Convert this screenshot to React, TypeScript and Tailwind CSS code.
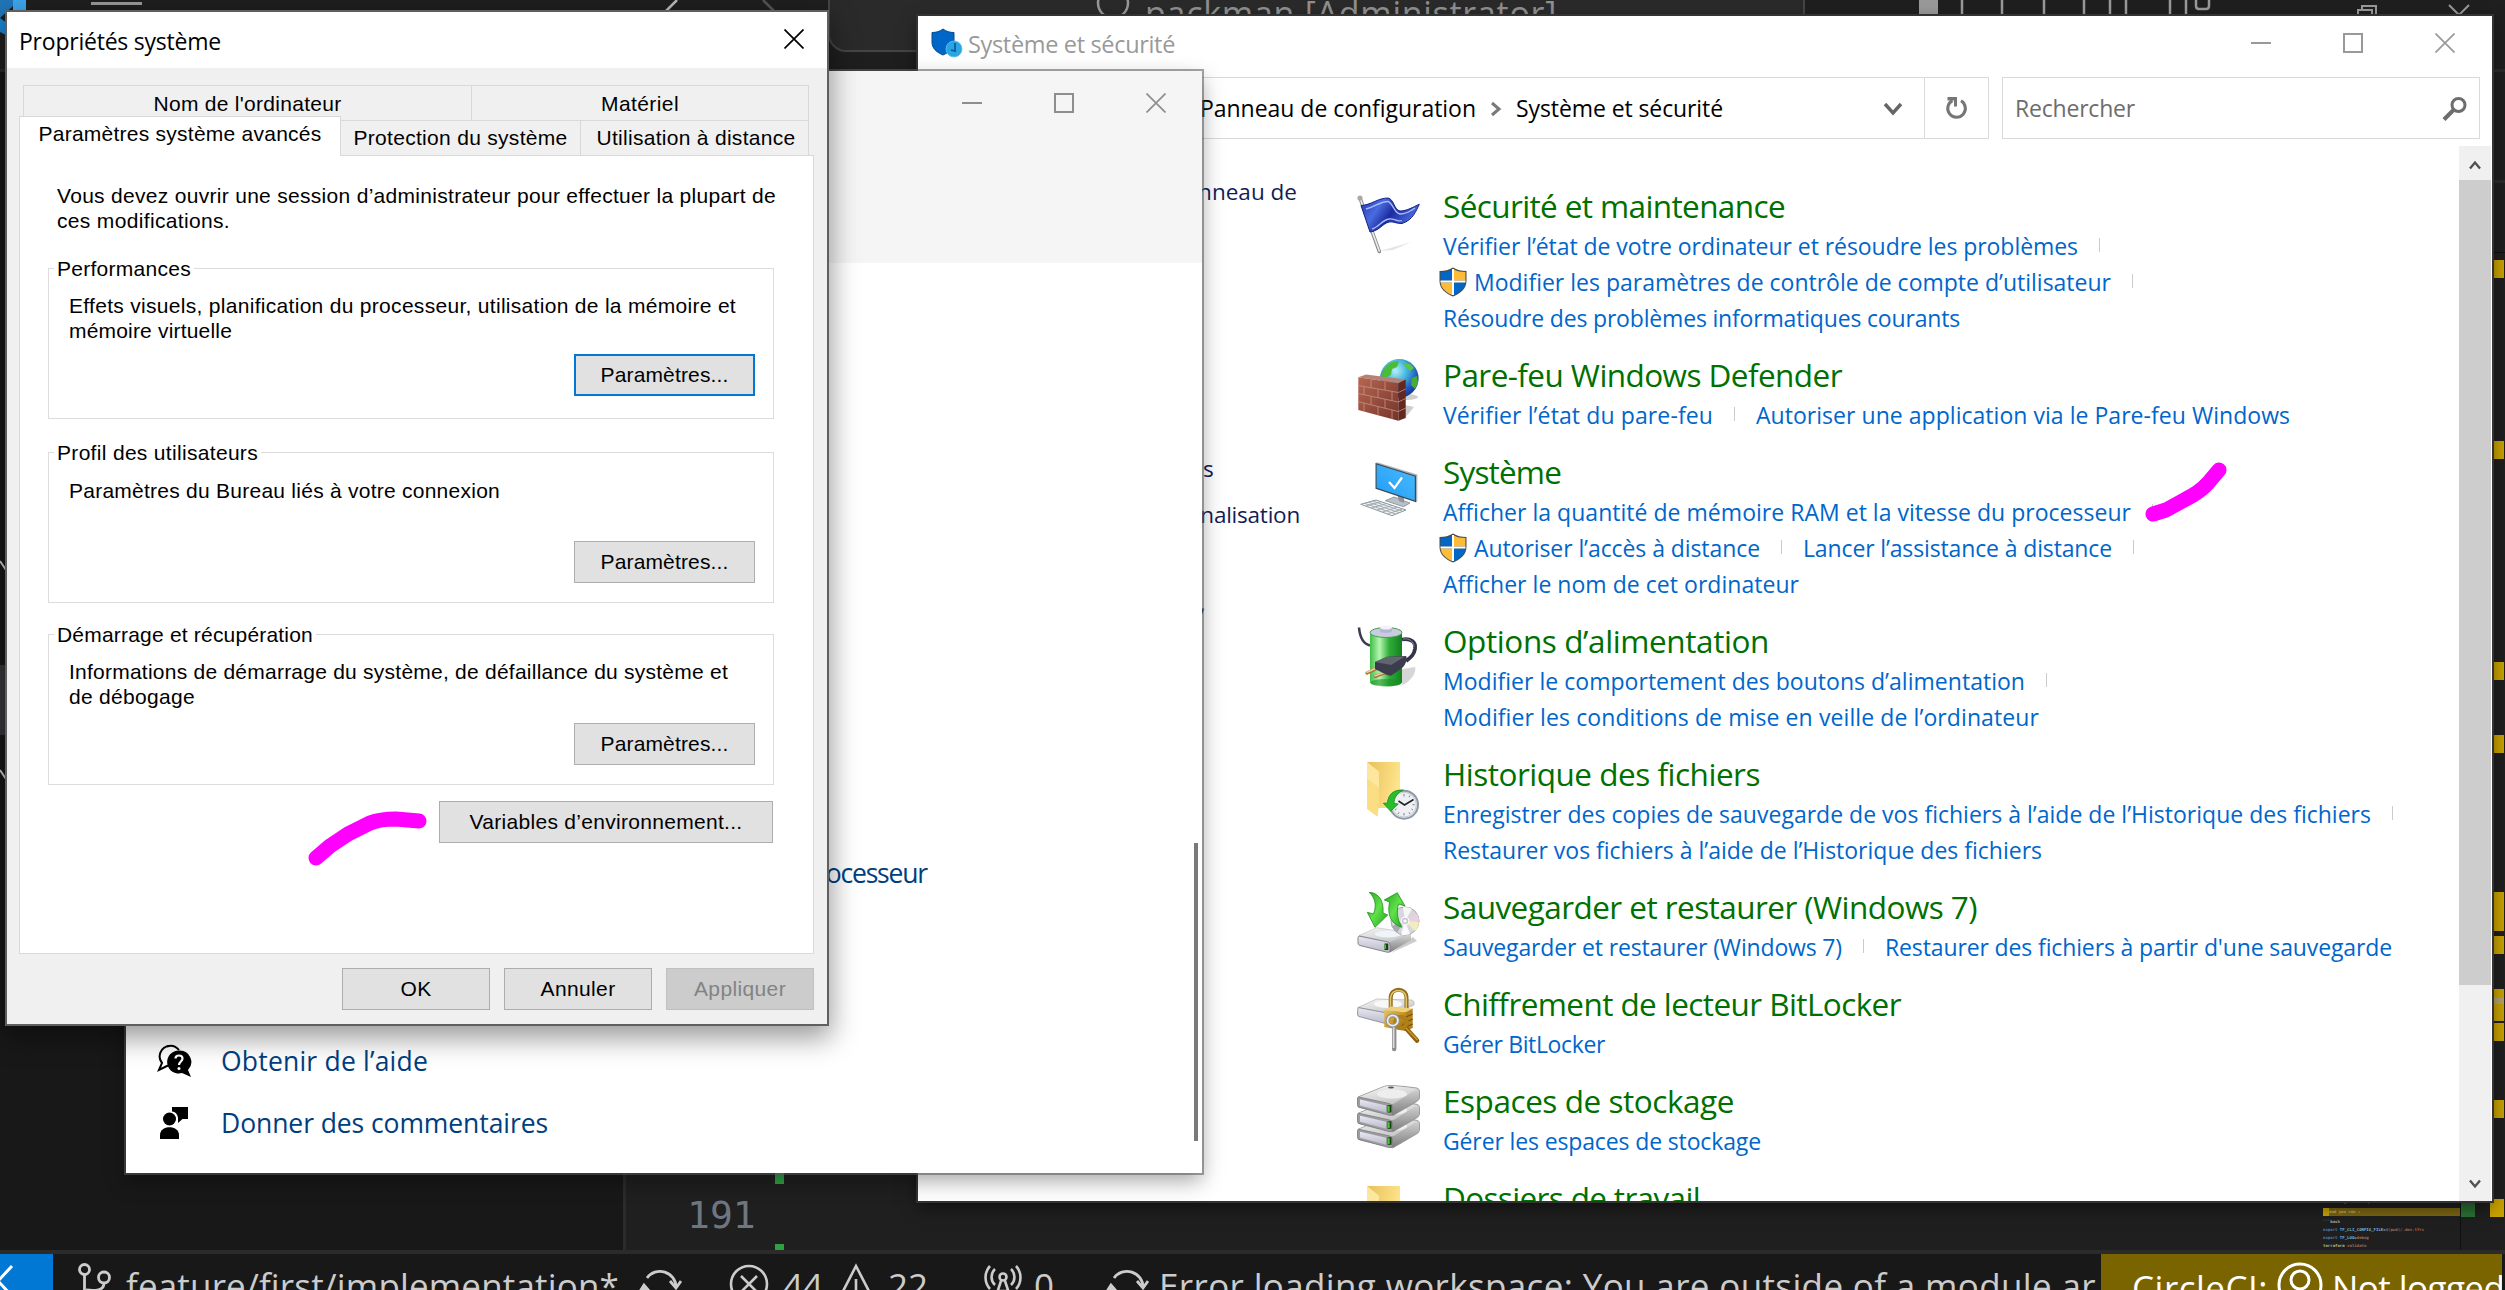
import React, { useLayoutEffect, useRef, useState } from 'react';

const UI = "font-['Open_Sans','Noto_Sans',sans-serif]";
const DLG = "font-['Liberation_Sans',sans-serif]";

/* One line of text whose tracking is adjusted so that it spans `w` pixels. */
function Fit({ w, className = '', children }: { w: number; className?: string; children: string }) {
  const ref = useRef<HTMLSpanElement>(null);
  const [spacing, setSpacing] = useState(0);
  useLayoutEffect(() => {
    const el = ref.current;
    if (!el) return;
    el.style.letterSpacing = '0px';
    const natural = el.getBoundingClientRect().width;
    const next = (w - natural) / children.length;
    el.style.letterSpacing = `${next}px`;
    setSpacing(next);
  }, [w, children]);
  return (
    <span ref={ref} className={`inline-block shrink-0 whitespace-pre ${className}`} style={{ letterSpacing: `${spacing}px` }}>
      {children}
    </span>
  );
}

/* ---------- category icons ---------- */

const Svg = ({ children }: { children: React.ReactNode }) => (
  <svg viewBox="0 0 64 64" className="h-16 w-16 shrink-0 overflow-visible">
    {children}
  </svg>
);

function Defs() {
  return (
    <svg className="absolute h-0 w-0">
      <defs>
        <linearGradient id="flag" x1="0" y1="0" x2="1" y2="0.4">
          <stop offset="0" stopColor="#2334b4" />
          <stop offset="0.35" stopColor="#4a6be0" />
          <stop offset="0.6" stopColor="#1c2ba0" />
          <stop offset="1" stopColor="#4d6ee0" />
        </linearGradient>
        <radialGradient id="globe" cx="0.4" cy="0.3" r="0.75">
          <stop offset="0" stopColor="#b6f0fb" />
          <stop offset="0.4" stopColor="#43b4dc" />
          <stop offset="0.75" stopColor="#2158bd" />
          <stop offset="1" stopColor="#162f8b" />
        </radialGradient>
        <linearGradient id="brick" x1="0" y1="0" x2="1" y2="1">
          <stop offset="0" stopColor="#b86650" />
          <stop offset="1" stopColor="#76332a" />
        </linearGradient>
        <linearGradient id="screen" x1="0" y1="1" x2="1" y2="0">
          <stop offset="0" stopColor="#1e9bf5" />
          <stop offset="1" stopColor="#4dbbff" />
        </linearGradient>
        <linearGradient id="battery" x1="0" y1="0" x2="1" y2="0">
          <stop offset="0" stopColor="#3fbf49" />
          <stop offset="0.3" stopColor="#b5f5b0" />
          <stop offset="0.6" stopColor="#2fae38" />
          <stop offset="1" stopColor="#12801f" />
        </linearGradient>
        <linearGradient id="folder" x1="0" y1="0" x2="1" y2="0.3">
          <stop offset="0" stopColor="#e6bf5a" />
          <stop offset="1" stopColor="#ffe48b" />
        </linearGradient>
        <linearGradient id="driveTop" x1="0" y1="0" x2="0.6" y2="1">
          <stop offset="0" stopColor="#f6f6f6" />
          <stop offset="1" stopColor="#c6c6c8" />
        </linearGradient>
        <linearGradient id="driveFront" x1="0" y1="0" x2="0" y2="1">
          <stop offset="0" stopColor="#e9e9f4" />
          <stop offset="1" stopColor="#b9b9c8" />
        </linearGradient>
        <linearGradient id="driveSide" x1="0" y1="0" x2="0" y2="1">
          <stop offset="0" stopColor="#dcdcdc" />
          <stop offset="1" stopColor="#7d7d7d" />
        </linearGradient>
        <linearGradient id="green" x1="0" y1="0" x2="1" y2="1">
          <stop offset="0" stopColor="#2aa51f" />
          <stop offset="0.5" stopColor="#5fe24c" />
          <stop offset="1" stopColor="#22a01b" />
        </linearGradient>
        <linearGradient id="gold" x1="0" y1="0" x2="1" y2="1">
          <stop offset="0" stopColor="#e6c25a" />
          <stop offset="0.5" stopColor="#c9982a" />
          <stop offset="1" stopColor="#8f6208" />
        </linearGradient>
      </defs>
    </svg>
  );
}

const FlagIcon = () => (
  <Svg>
    <path d="M23 61 L54 52 L36 60Z" fill="#d8d8d8" opacity="0.7" />
    <path d="M3 8 L22.3 61.5" stroke="#8a8a8a" strokeWidth="3.6" strokeLinecap="round" />
    <path d="M3 8 L22.3 61" stroke="#ececec" strokeWidth="1.6" strokeLinecap="round" />
    <circle cx="3" cy="8" r="2.6" fill="#a9a9a9" />
    <path d="M4 15.5 C14 15 21 8 31 8 C37 9 37 20 43 21 C50 21 56 17 62.3 14.3 C59 21 56 30 45 33.5 C40 34 36 31 32 32 C25 34 22 41 13 42Z" fill="url(#flag)" stroke="#16248c" strokeWidth="1" />
    <path d="M9 19 C18 17 24 11 31 11.5 C36 13 37 23 43 24 C50 24 54 21 58 18" fill="none" stroke="#a9bdfa" strokeWidth="1.4" />
    <path d="M15 39 C22 37 25 30 32 29 C37 28 40 32 45 30.500" fill="none" stroke="#a9bdfa" strokeWidth="1.3" />
  </Svg>
);

const FirewallIcon = () => (
  <Svg>
    <path d="M48 59 L57 48 L48 46Z" fill="#b9b9b9" opacity="0.7" />
    <ellipse cx="50" cy="38" rx="11" ry="3" fill="#bbb" opacity="0.7" />
    <circle cx="42.300" cy="19.300" r="19.300" fill="url(#globe)" />
    <path d="M26 12 C29 5 36 1.500 42 2 L40 8 L35 10 L34 16 L28 19 L24 17Z" fill="#4cbb3a" />
    <path d="M45 4 L53 5 L57 9 L53 12 L49 8Z" fill="#5cc448" />
    <path d="M55 19 L60 17 L61 24 L58 30 L54 26Z" fill="#46ae35" />
    <path d="M1.300 18.300 L9 15.500 L48.700 20.500 L41.300 24.300Z" fill="#b58275" />
    <path d="M1.300 18.300 L41.300 24.300 V61.700 L1.300 51Z" fill="url(#brick)" />
    <path d="M41.300 24.300 L48.700 20.500 V59 L41.300 61.700Z" fill="#64281f" />
    <g stroke="#c09488" strokeWidth="0.8" fill="none">
      <path d="M1.300 26.500 L41.300 33.500 L48.700 30 M1.300 34.500 L41.300 43 L48.700 39.500 M1.300 42.700 L41.300 52.500 L48.700 49" />
      <path d="M14 20.500 V28.500 M28 22.500 V31 M7 27.500 V35.700 M21 30 V38.700 M35 32.500 V41.500 M14 37.500 V45.700 M28 40.500 V49 M7 44 V52.500 M21 47.500 V56.300 M35 51 V60" />
    </g>
  </Svg>
);

const SystemIcon = () => (
  <Svg>
    <path d="M28.300 44.700 L37 41 L53 47 L46.500 50.700Z" fill="#b9c1c8" stroke="#7f8a92" strokeWidth="0.8" />
    <path d="M40 38 L47 40 V47 L42 45Z" fill="#8b979f" />
    <path d="M18.500 7.500 L20 6.300 L60.300 18.500 V45.500 L59 46.500Z" fill="#a9b2b9" />
    <path d="M18.500 7 L59 19.700 V46.200 L18.500 32.800Z" fill="#3e4a52" />
    <path d="M19.600 8.600 L57.800 20.500 V44.600 L19.600 31.800Z" fill="url(#screen)" />
    <path d="M32 26 L37.500 32 L45 21.500" fill="none" stroke="#fff" strokeWidth="2.200" />
    <path d="M3.700 48.300 L19 44 L49 54 L35 59.700Z" fill="#eef1f3" stroke="#8c969d" strokeWidth="1" />
    <path d="M7.500 47.300 L38.500 58 M11.500 46.200 L42 56.500 M15.500 45 L45.500 55.200 M9 50 L24 45.700 M14.500 52 L29.500 47.500 M20 54 L35 49.500 M25.500 56 L40 51.200 M30.500 58 L45 53" stroke="#9aa4ab" strokeWidth="0.9" />
  </Svg>
);

const BatteryIcon = () => (
  <Svg>
    <path d="M45 60 C52 58 60 48 58 42 L45 44Z" fill="#c4c4c4" opacity="0.7" />
    <path d="M2 2.500 C3 14 7 19 13 20.500" fill="none" stroke="#3b3c50" strokeWidth="2.600" />
    <path d="M13 7.500 V57 C13 63 45 63 45 57 V7.500Z" fill="url(#battery)" />
    <ellipse cx="29" cy="57.500" rx="15.500" ry="3.600" fill="#1b8f28" opacity="0.6" />
    <ellipse cx="29" cy="7.500" rx="16" ry="5" fill="#c9cbe0" stroke="#4aa04f" strokeWidth="1" />
    <path d="M23 2.500 V6 C23 8.500 35 8.500 35 6 V2.500Z" fill="#b4b7cf" />
    <ellipse cx="29" cy="2.500" rx="6" ry="2" fill="#f2f2fa" />
    <path d="M45 14.500 C54 13 59 17 58 24 C57 30 54 32 49 36" fill="none" stroke="#34354a" strokeWidth="3.800" />
    <path d="M46 14 C53 13 57 17 57 22" fill="none" stroke="#7d7f98" strokeWidth="1" />
    <path d="M21.500 42.500 L10 48" stroke="#a9743a" strokeWidth="3.200" strokeLinecap="round" />
    <path d="M21.500 42 L10 47.300" stroke="#f2d2a0" strokeWidth="1.500" strokeLinecap="round" />
    <path d="M30 47 L18 51.500" stroke="#a9743a" strokeWidth="3.200" strokeLinecap="round" />
    <path d="M30 46.500 L18 50.900" stroke="#f2d2a0" strokeWidth="1.500" strokeLinecap="round" />
    <path d="M18 37 L30 31.700 L49 31 C51 34 48 41 45 43 L34 50.700 L30 50 L18 44Z" fill="#3c3d4c" />
    <path d="M18 37 L30 32 L48 31.500 L34 40Z" fill="#62646f" />
  </Svg>
);

const FolderShape = () => (
  <>
    <path d="M10 4 H43 V50 H21Z" fill="url(#folder)" />
    <path d="M10 4 L22 13.700 V44 L20.700 58.700 L10 51Z" fill="#fbdd83" />
    <path d="M10 4 L22 13.700 V30 L10 20Z" fill="#ffeeb0" opacity="0.6" />
  </>
);

const HistoryIcon = () => (
  <Svg>
    <FolderShape />
    <circle cx="47" cy="46.700" r="14" fill="#e3e7ec" stroke="#8f9aa6" strokeWidth="2" />
    <circle cx="47" cy="46.700" r="12.300" fill="#eef0f3" stroke="#c4ccd4" strokeWidth="1" />
    <path d="M47 36 V38.500 M47 55 V57.500 M57.700 46.700 H55.500 M38 52 L39.500 51 M53 37.500 L52 39.200 M53 56 L52 54.300 M41 56 L42 54.300 M56 52 L54.500 51" stroke="#6d7680" strokeWidth="0.900" />
    <path d="M41.500 43 L47.500 47 L56.500 41.500" fill="none" stroke="#222" strokeWidth="1.600" />
    <path d="M46.300 32 C37 31.500 31 36 30.500 45 L26.300 45.300 L33.700 53.300 L41.300 46 L37 45.500 C37 40 40 35 46.300 32Z" fill="#27bd2d" stroke="#168a1b" strokeWidth="0.800" />
  </Svg>
);

const WorkFolderIcon = () => (
  <Svg>
    <FolderShape />
  </Svg>
);

const BackupIcon = () => (
  <Svg>
    <path d="M34 62 L60 50 L56 46Z" fill="#aaa" opacity="0.6" />
    <path d="M2 44.500 L19.700 36.700 L54 42 L33 52Z" fill="url(#driveTop)" stroke="#bdbdbd" strokeWidth="0.600" />
    <ellipse cx="31" cy="43" rx="13" ry="3.600" fill="#eef4fa" />
    <path d="M31 52 L54 42 V49 L33 61.500Z" fill="url(#driveSide)" />
    <path d="M2 45 L31 51 Q33 51.500 33 54 V59.500 Q33 62 30.500 61.300 L3 54.500 Q1 54 1 52 V46.500Z" fill="url(#driveFront)" stroke="#85858c" strokeWidth="1" />
    <rect x="27.500" y="52.500" width="3.800" height="6.500" fill="#173b12" />
    <rect x="27.500" y="53.500" width="1.600" height="4.500" fill="#41c828" />
    <circle cx="48" cy="30" r="14" fill="#d8d8dc" stroke="#a7a7ad" strokeWidth="1" />
    <path d="M48 30 L60 22.500 A14 14 0 0 1 62 30Z" fill="#e9cfe2" />
    <path d="M48 30 L62 31 A14 14 0 0 1 58 40Z" fill="#f0eebc" />
    <path d="M48 30 L53 43 A14 14 0 0 1 44 43.500Z" fill="#fafafa" />
    <path d="M48 30 L46 16 A14 14 0 0 1 55 18Z" fill="#f6f6f6" />
    <path d="M48 30 L40 41.500 A14 14 0 0 1 35 35Z" fill="#a9a9af" />
    <circle cx="48" cy="30" r="4" fill="#c9ccd4" stroke="#fff" strokeWidth="1" />
    <circle cx="48" cy="30" r="1.600" fill="#fff" />
    <path d="M12.300 1.300 C22 2 27 10 26 22 L30.700 24 L18 36.300 L10.300 21.300 L16.500 23 C20 14 18 7 12.300 1.300Z" fill="url(#green)" stroke="#208f1a" strokeWidth="0.800" />
    <path d="M40.300 1.700 L27.300 9 L32.500 11 C30 24 34 33 44.700 36.300 C40 28 39.500 20 41.500 13 L48 15Z" fill="url(#green)" stroke="#208f1a" strokeWidth="0.800" />
  </Svg>
);

const LockerIcon = () => (
  <Svg>
    <path d="M1 19.500 L19.700 11 L55 12 Q58 13 57 17 L36 26Z" fill="url(#driveTop)" stroke="#b5b5b5" strokeWidth="0.700" />
    <ellipse cx="31" cy="16" rx="14" ry="4" fill="#f8f8f8" />
    <path d="M1 19.500 L30 25 V36 L2 28.500 Q0.500 28 0.500 26Z" fill="url(#driveFront)" stroke="#8c8c92" strokeWidth="0.900" />
    <path d="M33.700 22 V10 C33.700 -1 49.500 -1 49.500 10 V22" fill="none" stroke="#8d6a18" strokeWidth="4" />
    <path d="M33.500 22 V10 C33.700 0 49.300 0 49.300 10 V22" fill="none" stroke="#e3c66c" strokeWidth="1.600" />
    <path d="M27.300 22 L49 24 V43 L27.300 39Z" fill="url(#gold)" />
    <path d="M27.300 22 L34 18.500 L55.700 20.500 L49 24Z" fill="#ecd07a" />
    <path d="M49 24 L55.700 20.500 V40 L49 43Z" fill="#b38220" />
    <path d="M49 29 L55.700 26 M49 34 L55.700 31 M49 39 L55.700 36" stroke="#74500a" strokeWidth="1.300" />
    <path d="M47 38 L60 52.500" stroke="#8b5f0a" strokeWidth="4.600" strokeLinecap="round" />
    <path d="M47 38 L60 51.500" stroke="#cc9626" strokeWidth="1.800" strokeLinecap="round" />
    <circle cx="44" cy="34.500" r="5.600" fill="none" stroke="#b07f1a" strokeWidth="4.400" />
    <path d="M37.200 38 V61" stroke="#8c8c8c" strokeWidth="4.400" strokeLinecap="round" />
    <path d="M36.600 38 V60" stroke="#dadada" strokeWidth="1.800" />
    <circle cx="35.700" cy="32.500" r="5.200" fill="none" stroke="#8f8f8f" strokeWidth="3.800" />
    <circle cx="35.700" cy="32.500" r="5.200" fill="none" stroke="#ececec" strokeWidth="1.800" />
  </Svg>
);

const StackDrive = ({ shift }: { shift: string }) => (
  <g transform={shift}>
    <path d="M1 12 L28 1 Q34 -0.500 60 3 Q62.500 4 62.500 6 V13 Q62 15.500 59 17 L36 30.500 L1 22Z" fill="url(#driveSide)" stroke="#8d8d8d" strokeWidth="0.800" />
    <path d="M2 12 L28 1.500 Q34 0 60 4 L37 18.500 Q34 19.500 30 18.500Z" fill="url(#driveTop)" />
    <ellipse cx="35" cy="9" rx="15" ry="4.500" fill="#eeeeee" />
    <ellipse cx="34" cy="2.600" rx="3" ry="1" fill="#555" />
    <path d="M2 12 L32 18.500 Q35.500 19.300 35.500 22 V28 Q35.500 31 32 30.300 L3 22.500 Q0.500 22 0.500 19.500 V14 Q0.500 12 2 12Z" fill="#9c9ca0" stroke="#7f7f84" strokeWidth="0.800" />
    <path d="M3 14.500 L29 20.500 V27.500 L3 20.500Z" fill="url(#driveFront)" />
    <rect x="30.500" y="20" width="4" height="7.500" fill="#173b12" />
    <rect x="30.700" y="20.800" width="2" height="6" fill="#46c62c" />
  </g>
);

const StorageIcon = () => (
  <Svg>
    <StackDrive shift="translate(0 32.300)" />
    <StackDrive shift="translate(0 16.300)" />
    <StackDrive shift="translate(0 0)" />
  </Svg>
);

const Shield = () => (
  <svg viewBox="0 0 28 30" className="mr-[7px] -ml-[4px] h-[30px] w-[28px] shrink-0 self-center">
    <path d="M14 0.500 C18 3 22 4 27.500 4 V14 C27.500 21 22 26.500 14 29.500 C6 26.500 0.500 21 0.500 14 V4 C6 4 10 3 14 0.500Z" fill="#4a4a4a" />
    <path d="M13 2.500 V13.500 H1.600 V5 C6 5 9.500 4.300 13 2.500Z" fill="#0067c6" />
    <path d="M15 2.500 V13.500 H26.400 V5 C22 5 18.500 4.300 15 2.500Z" fill="#fdbc38" />
    <path d="M13 28 V15.500 H1.700 C2.200 21 6.500 25.300 13 28Z" fill="#fdbc38" />
    <path d="M15 28 V15.500 H26.300 C25.800 21 21.500 25.300 15 28Z" fill="#0067c6" />
    <path d="M13 2 h2 V28 h-2Z M1.500 13.500 H26.500 v2 H1.500Z" fill="#fff" />
  </svg>
);

/* ---------- control panel data ---------- */

type Link = { t: string; w: number; shield?: boolean; sep?: boolean };
type Category = { title: string; w: number; icon: () => React.ReactElement; rows: Link[][] };

const categories: Category[] = [
  {
    title: 'Sécurité et maintenance', w: 342, icon: FlagIcon,
    rows: [
      [{ t: 'Vérifier l’état de votre ordinateur et résoudre les problèmes', w: 635, sep: true }],
      [{ t: 'Modifier les paramètres de contrôle de compte d’utilisateur', w: 637, shield: true, sep: true }],
      [{ t: 'Résoudre des problèmes informatiques courants', w: 517 }],
    ],
  },
  {
    title: 'Pare-feu Windows Defender', w: 399, icon: FirewallIcon,
    rows: [[{ t: 'Vérifier l’état du pare-feu', w: 270, sep: true }, { t: 'Autoriser une application via le Pare-feu Windows', w: 534 }]],
  },
  {
    title: 'Système', w: 118, icon: SystemIcon,
    rows: [
      [{ t: 'Afficher la quantité de mémoire RAM et la vitesse du processeur', w: 688, sep: true }],
      [{ t: 'Autoriser l’accès à distance', w: 286, shield: true, sep: true }, { t: 'Lancer l’assistance à distance', w: 309, sep: true }],
      [{ t: 'Afficher le nom de cet ordinateur', w: 356 }],
    ],
  },
  {
    title: 'Options d’alimentation', w: 326, icon: BatteryIcon,
    rows: [
      [{ t: 'Modifier le comportement des boutons d’alimentation', w: 582, sep: true }],
      [{ t: 'Modifier les conditions de mise en veille de l’ordinateur', w: 596 }],
    ],
  },
  {
    title: 'Historique des fichiers', w: 317, icon: HistoryIcon,
    rows: [
      [{ t: 'Enregistrer des copies de sauvegarde de vos fichiers à l’aide de l’Historique des fichiers', w: 928, sep: true }],
      [{ t: 'Restaurer vos fichiers à l’aide de l’Historique des fichiers', w: 599 }],
    ],
  },
  {
    title: 'Sauvegarder et restaurer (Windows 7)', w: 534, icon: BackupIcon,
    rows: [[{ t: 'Sauvegarder et restaurer (Windows 7)', w: 399, sep: true }, { t: 'Restaurer des fichiers à partir d\'une sauvegarde', w: 507 }]],
  },
  { title: 'Chiffrement de lecteur BitLocker', w: 458, icon: LockerIcon, rows: [[{ t: 'Gérer BitLocker', w: 162 }]] },
  { title: 'Espaces de stockage', w: 291, icon: StorageIcon, rows: [[{ t: 'Gérer les espaces de stockage', w: 318 }]] },
  { title: 'Dossiers de travail', w: 257, icon: WorkFolderIcon, rows: [] },
];

function CategoryBlock({ c }: { c: Category }) {
  const Icon = c.icon;
  return (
    <div className="flex pb-[17px]">
      <div className="w-[86px] shrink-0 pt-[6px]">
        <Icon />
      </div>
      <div>
        <div className="h-[44px] text-[31.500px] leading-[44px] text-[#007000]">
          <Fit w={c.w}>{c.title}</Fit>
        </div>
        {c.rows.map((row, i) => (
          <div key={i} className="flex h-9 text-[23px] leading-9 text-[#0066cc]">
            {row.map((l) => (
              <React.Fragment key={l.t}>
                {l.shield && <Shield />}
                <Fit w={l.w}>{l.t}</Fit>
                {l.sep && <span className="mx-[21px] mt-[10px] h-[14px] w-px bg-[#cccccc]" />}
              </React.Fragment>
            ))}
          </div>
        ))}
      </div>
    </div>
  );
}

const Caption = ({ gap, className }: { gap: string; className: string }) => (
  <div className={`flex ${gap} ${className}`}>
    <svg viewBox="0 0 20 20" className="h-5 w-5"><path d="M0 10 H20" stroke="currentColor" strokeWidth="2" /></svg>
    <svg viewBox="0 0 20 20" className="h-5 w-5"><rect x="1" y="1" width="18" height="18" fill="none" stroke="currentColor" strokeWidth="2" /></svg>
    <svg viewBox="0 0 20 20" className="h-5 w-5"><path d="M0.500 0.500 L19.500 19.500 M19.500 0.500 L0.500 19.500" stroke="currentColor" strokeWidth="1.700" /></svg>
  </div>
);

function ControlPanel() {
  return (
    <section className={`absolute top-[16px] left-[918px] flex h-[1185px] w-[1574px] flex-col overflow-hidden bg-white shadow-[0_0_0_2px_#333333,0_6px_16px_rgba(0,0,0,0.5)] ${UI}`}>
      <header className="flex h-[61px] shrink-0 items-start justify-between pt-[12px] pr-[37px] pl-[13px]">
        <div className="flex items-center">
          <svg viewBox="0 0 32 32" className="h-8 w-8">
            <path d="M12 1 C15 3.500 19 4.500 23 4.500 V14 C23 20 19 24 12 27 C5 24 1 20 1 14 V4.500 C5 4.500 9 3.500 12 1Z" fill="#0067c8" stroke="#024a92" />
            <circle cx="23" cy="21" r="8" fill="#2aa5e2" />
            <circle cx="23" cy="21" r="8" fill="none" stroke="#5cc2f0" strokeWidth="0.800" />
            <path d="M24 15 V23 L20 22" fill="none" stroke="#0b5da3" strokeWidth="1.800" />
          </svg>
          <Fit w={207} className="ml-[5px] text-[23.500px] leading-8 text-[#999999]">Système et sécurité</Fit>
        </div>
        <Caption gap="gap-[72px]" className="pt-[5px] text-[#999999]" />
      </header>
      <div className="flex h-[62px] shrink-0 gap-[13px] pr-[12px] pl-[13px]">
        <div className="flex flex-1 border border-[#d9d9d9]">
          <div className="flex flex-1 items-center pt-px pl-[268px] text-[23px] text-black">
            <Fit w={276}>Panneau de configuration</Fit>
            <svg viewBox="0 0 12 16" className="mx-[14px] h-4 w-3"><path d="M2 2 L9 8 L2 14" fill="none" stroke="#7a7a7a" strokeWidth="3" /></svg>
            <Fit w={207}>Système et sécurité</Fit>
            <svg viewBox="0 0 20 14" className="mr-[21px] ml-auto h-[14px] w-5"><path d="M2 2 L10 11 L18 2" fill="none" stroke="#666666" strokeWidth="3.400" /></svg>
          </div>
          <div className="flex w-[64px] items-center justify-center border-l border-[#d9d9d9]">
            <svg viewBox="0 0 24 24" className="h-6 w-6"><path d="M16 4.800 A8.800 8.800 0 1 1 7.500 4.600" fill="none" stroke="#767676" strokeWidth="3" /><path d="M2.500 1 H12 V10.500 H9 V4.500 H2.500Z" fill="#767676" /></svg>
          </div>
        </div>
        <div className="flex w-[478px] items-center justify-between border border-[#d9d9d9] pt-px pr-[11px] pl-[12px] text-[23px] text-[#6d6d6d]">
          <Fit w={120}>Rechercher</Fit>
          <svg viewBox="0 0 26 26" className="h-[26px] w-[26px]"><circle cx="16.500" cy="9" r="6.500" fill="none" stroke="#6d6d6d" strokeWidth="3" /><path d="M12 13.500 L2 23.500" stroke="#6d6d6d" strokeWidth="4" /></svg>
        </div>
      </div>
      <div className="mt-[7px] flex min-h-0 flex-1">
        <nav className="flex w-[439px] shrink-0 flex-col items-start text-[22.500px] leading-[31px] text-[#151c55]">
          <Fit w={125} className="mt-[30px] ml-[254px]">Panneau de</Fit>
          <Fit w={139} className="mt-[246px] ml-[157px]">Programmes</Fit>
          <Fit w={172} className="mt-[15px] ml-[210px]">personnalisation</Fit>
          <Fit w={76} className="mt-[57px] ml-[210px]">Horloge,</Fit>
        </nav>
        <div className="flex-1 overflow-hidden pt-[38px]">
          {categories.map((c) => (
            <CategoryBlock key={c.title} c={c} />
          ))}
        </div>
        <div className="mr-px flex w-[32px] flex-col bg-[#f0f0f0]">
          <div className="flex h-[34px] items-center justify-center">
            <svg viewBox="0 0 12 10" className="mt-1 h-[10px] w-3"><path d="M1 8.500 L6 2.500 L11 8.500" fill="none" stroke="#505050" strokeWidth="2.400" /></svg>
          </div>
          <div className="h-[805px] bg-[#cdcdcd]" />
          <svg viewBox="0 0 12 10" className="mx-auto mt-auto mb-[12px] h-[10px] w-3"><path d="M1 1.500 L6 7.500 L11 1.500" fill="none" stroke="#505050" strokeWidth="2.400" /></svg>
        </div>
      </div>
    </section>
  );
}

/* ---------- settings window ---------- */

function SettingsWindow() {
  return (
    <section className={`absolute top-[71px] left-[126px] flex h-[1102px] w-[1076px] flex-col bg-white shadow-[0_0_0_2px_rgba(90,90,90,0.55),0_8px_20px_rgba(0,0,0,0.35)] ${UI}`}>
      <header className="flex h-[192px] shrink-0 justify-end bg-[#f5f5f6] pt-[22px] pr-[36px]">
        <Caption gap="gap-[72px]" className="text-[#8e8e8e]" />
      </header>
      <div className="flex flex-1">
        <div className="flex flex-1 flex-col items-start pl-[31px] text-[26.500px] leading-[40px] text-[#003e7e]">
          <Fit w={126} className="mt-[590px] ml-[644px]">processeur</Fit>
          <div className="mt-[137px] flex h-[62px] items-center">
            <svg viewBox="0 0 36 34" className="h-[34px] w-9">
              <path d="M12 2 A10.500 10.500 0 0 0 5 19 L2 26 L11 21.500" fill="none" stroke="#000" strokeWidth="2" />
              <path d="M10 2.300 A11 11 0 0 1 22 6" fill="none" stroke="#000" strokeWidth="2" />
              <path d="M22 6.500 A11.500 11.500 0 0 1 31 26 L34 33 L25 29 A11.500 11.500 0 1 1 22 6.500Z" fill="#000" />
              <path d="M18.500 14.500 C18.500 10.500 25.500 10.500 25.500 14.500 C25.500 17.500 22 17.500 22 21" fill="none" stroke="#fff" strokeWidth="2.200" />
              <circle cx="22" cy="24.500" r="1.500" fill="#fff" />
            </svg>
            <Fit w={207} className="ml-[28px]">Obtenir de l’aide</Fit>
          </div>
          <div className="flex h-[62px] items-center">
            <svg viewBox="0 0 36 34" className="h-[34px] w-9">
              <circle cx="12.500" cy="13" r="6.500" fill="#000" />
              <path d="M3 33 V29 C3 18.500 22 18.500 22 29 V33Z" fill="#000" />
              <path d="M15 1 H31 V13 H25.500 L21 17 V13 C21 9 19 6 15 5.500Z" fill="#000" />
            </svg>
            <Fit w={327} className="ml-[28px]">Donner des commentaires</Fit>
          </div>
        </div>
        <div className="mt-[580px] mr-[4px] h-[298px] w-[4px] bg-[#7a7a7a]" />
      </div>
    </section>
  );
}

/* ---------- system properties dialog ---------- */

const btn = 'flex h-[42px] items-center justify-center border border-[#adadad] bg-[#e1e1e1]';

function Group({ title, tw, lines, pos, body, focused }: { title: string; tw: number; lines: [string, number][]; pos: string; body: string; focused?: boolean }) {
  return (
    <div className={`flex h-[151px] w-[726px] flex-col border border-[#dcdcdc] ${pos}`}>
      <div className="-mt-[13px] ml-[5px] self-start bg-white px-[3px] leading-[25px]">
        <Fit w={tw}>{title}</Fit>
      </div>
      <div className={`ml-[20px] flex flex-col items-start leading-[25px] ${body}`}>
        {lines.map(([t, w]) => (
          <Fit key={t} w={w}>{t}</Fit>
        ))}
      </div>
      <div className={`mt-[11px] mr-[18px] flex h-[42px] w-[181px] shrink-0 items-center justify-center self-end bg-[#e1e1e1] ${focused ? 'border-2 border-[#0078d7]' : 'border border-[#adadad]'}`}>
        <Fit w={128}>Paramètres...</Fit>
      </div>
    </div>
  );
}

function SystemDialog() {
  const tab = 'flex items-center justify-center border border-[#d9d9d9] bg-[#f0f0f0]';
  return (
    <section className={`absolute top-[12px] left-[7px] flex h-[1012px] w-[820px] flex-col bg-[#f0f0f0] text-[21px] text-black shadow-[0_0_0_2px_#5f5f5f,0_10px_26px_4px_rgba(0,0,0,0.4)] ${DLG}`}>
      <header className={`flex h-[56px] shrink-0 items-start justify-between bg-white pr-[23px] pl-[12px] ${UI}`}>
        <Fit w={202} className="mt-[11px] text-[23px] leading-[36px]">Propriétés système</Fit>
        <svg viewBox="0 0 20 20" className="mt-[17px] h-5 w-5"><path d="M0.500 0.500 L19.500 19.500 M19.500 0.500 L0.500 19.500" stroke="#000" strokeWidth="1.700" /></svg>
      </header>
      <div className="mt-[17px] ml-[16px] flex h-[35px] shrink-0">
        <div className={`${tab} w-[449px] border-b-0 pt-[2px]`}><Fit w={188}>Nom de l'ordinateur</Fit></div>
        <div className={`${tab} w-[337px] border-b-0 border-l-0 pt-[2px]`}><Fit w={78}>Matériel</Fit></div>
      </div>
      <div className="relative z-10 -mt-[4px] -mb-px ml-[12px] flex h-[40px] shrink-0 items-end">
        <div className="flex h-[40px] w-[322px] items-start justify-center border border-b-0 border-[#d9d9d9] bg-white pt-px"><Fit w={283}>Paramètres système avancés</Fit></div>
        <div className={`${tab} h-[36px] w-[240px] border-l-0`}><Fit w={214}>Protection du système</Fit></div>
        <div className={`${tab} h-[36px] w-[228px] border-l-0 pl-[3px]`}><Fit w={199}>Utilisation à distance</Fit></div>
      </div>
      <div className="ml-[12px] flex h-[799px] w-[795px] shrink-0 flex-col items-start border border-[#d9d9d9] bg-white">
        <div className="mt-[27px] ml-[37px] flex flex-col items-start leading-[25px]">
          <Fit w={719}>Vous devez ouvrir une session d’administrateur pour effectuer la plupart de</Fit>
          <Fit w={173}>ces modifications.</Fit>
        </div>
        <Group pos="mt-[35px] ml-[28px]" body="mt-[12px] h-[50px]" title="Performances" tw={134} focused lines={[['Effets visuels, planification du processeur, utilisation de la mémoire et', 667], ['mémoire virtuelle', 163]]} />
        <Group pos="mt-[33px] ml-[28px]" body="mt-[13px] h-[52px]" title="Profil des utilisateurs" tw={201} lines={[['Paramètres du Bureau liés à votre connexion', 431]]} />
        <Group pos="mt-[31px] ml-[28px]" body="mt-[12px] h-[53px]" title="Démarrage et récupération" tw={256} lines={[['Informations de démarrage du système, de défaillance du système et', 659], ['de débogage', 126]]} />
        <div className={`${btn} mt-[16px] ml-[419px] w-[334px]`}><Fit w={273}>Variables d’environnement...</Fit></div>
      </div>
      <div className="mt-[14px] flex justify-end gap-[14px] pr-[13px]">
        <div className={`${btn} w-[148px]`}><Fit w={31}>OK</Fit></div>
        <div className={`${btn} w-[148px]`}><Fit w={75}>Annuler</Fit></div>
        <div className="flex h-[42px] w-[148px] items-center justify-center border border-[#bfbfbf] bg-[#cccccc] text-[#838383]"><Fit w={92}>Appliquer</Fit></div>
      </div>
    </section>
  );
}

/* ---------- editor behind the windows ---------- */

const SyncIcon = ({ className }: { className: string }) => (
  <svg viewBox="0 0 44 40" className={`h-10 w-11 shrink-0 ${className}`} fill="none" stroke="#cccccc" strokeWidth="2.800">
    <path d="M9 11 A16 16 0 0 1 38 20 M32 14 L38 21 L43 14" />
    <path d="M35 29 A16 16 0 0 1 6 20 M1 26 L6 18 L12 25" />
  </svg>
);

function StatusBar() {
  return (
    <footer className={`flex h-[40px] shrink-0 items-start overflow-hidden border-t-4 border-[#2b2b2b] bg-[#181818] text-[35px] leading-[50px] text-[#cccccc] ${UI}`}>
      <div className="h-[62px] w-[53px] shrink-0 bg-[#0078d4]">
        <svg viewBox="0 0 53 62" className="h-[62px] w-[53px]"><path d="M12 12 L-2 27 L12 42" fill="none" stroke="#fff" strokeWidth="3" /></svg>
      </div>
      <svg viewBox="0 0 36 46" className="mt-[9px] ml-[24px] h-[46px] w-9 shrink-0" fill="none" stroke="#cccccc" strokeWidth="2.800">
        <circle cx="7.500" cy="6.500" r="5" /><circle cx="27" cy="14.500" r="5.500" /><path d="M7.500 12 V32 M27 20 C27 28 18 28 9 27" />
      </svg>
      <Fit w={493} className="mt-[7px] ml-[13px]">feature/first/implementation*</Fit>
      <SyncIcon className="mt-[13px] ml-[19px]" />
      <svg viewBox="0 0 40 40" className="mt-[10px] ml-[47px] h-10 w-10 shrink-0" fill="none" stroke="#cccccc" strokeWidth="2.600">
        <circle cx="20" cy="20" r="18" /><path d="M12 12 L28 28 M28 12 L12 28" />
      </svg>
      <Fit w={40} className="mt-[7px] ml-[14px]">44</Fit>
      <svg viewBox="0 0 40 40" className="mt-[9px] ml-[13px] h-10 w-10 shrink-0" fill="none" stroke="#cccccc" strokeWidth="2.600">
        <path d="M20 3 L37 36 H3Z M20 16 V27" />
      </svg>
      <Fit w={40} className="mt-[7px] ml-[12px]">22</Fit>
      <svg viewBox="0 0 40 40" className="mt-[9px] ml-[55px] h-10 w-10 shrink-0" fill="none" stroke="#cccccc" strokeWidth="2.600">
        <circle cx="20" cy="14" r="3.500" /><path d="M18 18 L12 36 M22 18 L28 36 M12 22 A11 11 0 0 1 12 6 M28 22 A11 11 0 0 0 28 6 M7 26 A17 17 0 0 1 7 3 M33 26 A17 17 0 0 0 33 3 M15 28 H25" />
      </svg>
      <Fit w={22} className="mt-[7px] ml-[11px]">0</Fit>
      <SyncIcon className="mt-[13px] ml-[49px]" />
      <div className="mt-[7px] ml-[10px] w-[938px] shrink-0 overflow-hidden">
        <Fit w={937}>Error loading workspace: You are outside of a module ar</Fit>
      </div>
      <div className="ml-[4px] flex h-[62px] w-[401px] shrink-0 overflow-hidden bg-[#7a6400] text-white">
        <Fit w={136} className="mt-[9px] ml-[31px]">CircleCI:</Fit>
        <svg viewBox="0 0 46 46" className="mt-[8px] ml-[9px] h-[46px] w-[46px] shrink-0" fill="none" stroke="#fff" strokeWidth="3">
          <circle cx="23" cy="23" r="21" /><circle cx="23" cy="18" r="9" /><path d="M9 38 C12 28 34 28 37 38" />
        </svg>
        <Fit w={210} className="mt-[9px] ml-[9px]">Not logged in</Fit>
      </div>
    </footer>
  );
}

function EditorTitleBar() {
  return (
    <header className={`flex h-[72px] shrink-0 overflow-hidden border-b-[3px] border-[#2b2b2b] bg-[#1f1f1f] ${UI}`}>
      <svg viewBox="0 0 828 69" className="h-[69px] w-[828px] shrink-0" fill="none">
        <path d="M13 0 H26 V36 H13Z" fill="#3ea6ee" />
        <path d="M0 0 H13 V6 L0 18Z" fill="#2177b8" />
        <path d="M0 18 L8 24 V36 L0 32Z" fill="#1a86d6" />
        <path d="M91 3.500 H142" stroke="#999" strokeWidth="3" />
        <path d="M677 0 L665 12" stroke="#bbb" strokeWidth="2.500" />
        <path d="M763 0 L775 12" stroke="#555" strokeWidth="2.500" />
      </svg>
      <div className="-mt-[28px] flex h-[80px] w-[977px] shrink-0 overflow-hidden rounded-[18px] border-2 border-[#454545] bg-[#2a2a2a] pl-[265px]">
        <svg viewBox="0 0 40 60" className="h-[60px] w-10 shrink-0"><circle cx="18" cy="29" r="15" fill="none" stroke="#999" strokeWidth="2.500" /></svg>
        <Fit w={412} className="mt-[14px] ml-[10px] text-[34px] leading-[50px] text-[#8f8f8f]">packman [Administrator]</Fit>
      </div>
      <svg viewBox="1805 0 700 69" className="h-[69px] w-[700px] shrink-0" fill="none" stroke="#999" strokeWidth="2.500">
        <path d="M1919 0 H1938 V30 H1919Z" fill="#999" stroke="none" />
        <path d="M1962 0 V30 M2002 0 V30 M2044 0 V30 M2084 0 V30 M2110 0 V30 M2126 0 V30 M2170 0 V30 M2186 0 V30" />
        <path d="M2196 0 V6 Q2196 9 2199 9 H2206 Q2209 9 2209 6 V0" />
        <path d="M2266 15 H2286 M2358 22 V10 H2372 V22 M2362 10 V6 H2376 V18" strokeWidth="2" />
        <path d="M2449 5 L2469 25 M2469 5 L2449 25" strokeWidth="2" />
      </svg>
    </header>
  );
}

const marks: [number, number, string][] = [
  [260, 18, '#c8a200'], [441, 18, '#c8a200'], [662, 18, '#c8a200'], [735, 18, '#c8a200'], [892, 39, '#c8a200'], [936, 18, '#c8a200'],
  [989, 9, '#c8a200'], [998, 6, '#b3a36b'], [1004, 17, '#c8a200'], [1023, 18, '#c8a200'], [1100, 18, '#c8a200'], [1199, 18, '#c8a200'],
];

function Minimap() {
  return (
    <div className="mt-[1126px] flex h-[52px] w-[137px] flex-col font-['DejaVu_Sans_Mono',monospace] text-[4px] leading-[8px] font-bold text-[#aaaaaa]">
      <div className="h-[10px] pl-1">{'# configuration options'}</div>
      <div className="mb-[2px] h-[8px] shrink-0 border-l-[6px] border-[#c8a200] bg-[#7a6412] text-[#c8b060]">and you run :</div>
      <div>```bash</div>
      <div><span className="text-[#4a80b0]">export </span><span className="text-[#7fb6d6]">TF_CLI_CONFIG_FILE=</span><span className="text-[#a06a58]">$(pwd)/.dev.tfrc</span></div>
      <div><span className="text-[#4a80b0]">export </span><span className="text-[#7fb6d6]">TF_LOG=</span><span className="text-[#a06a58]">debug</span></div>
      <div><span className="text-[#b5b58a]">terraform </span><span className="text-[#a06a58]">validate</span></div>
    </div>
  );
}

function Editor() {
  return (
    <div className="flex h-[1290px] w-[2505px] flex-col bg-[#1f1f1f]">
      <EditorTitleBar />
      <div className="flex h-[1178px] shrink-0 overflow-hidden">
        <aside className="w-[626px] shrink-0 border-r-[3px] border-[#2b2b2b] bg-[#181818]">
          <svg viewBox="0 72 8 1178" className="h-[1178px] w-2">
            <rect x="0" y="665" width="8" height="70" fill="#37373d" />
            <path d="M0 561 L6 570 M0 770 L6 779" stroke="#ccc" strokeWidth="2" />
          </svg>
        </aside>
        <div className="flex w-[1697px] shrink-0 pt-[1101px]">
          <div className="ml-[61px] h-[77px] w-[88px] font-['DejaVu_Sans_Mono',monospace] text-[38px] leading-[84px] text-[#6e7681]">191</div>
          <div className="flex h-[77px] w-[9px] flex-col justify-between bg-transparent">
            <div className="h-[11px] bg-[#2ea043]" />
            <div className="h-[6px] bg-[#2ea043]" />
          </div>
        </div>
        <Minimap />
        <div className="w-[45px] border-l border-[#101010]">
          <svg viewBox="2461 72 44 1178" className="h-[1178px] w-11">
            <path d="M2461 181.500 H2505" stroke="#2b2b2b" strokeWidth="3" />
            <path d="M2461 252.500 H2505" stroke="#101010" />
            <rect x="2461" y="1199" width="14" height="18" fill="#2a7035" />
            {marks.map(([y, h, fill]) => (
              <rect key={y} x="2490" y={y} width="14" height={h} fill={fill} />
            ))}
          </svg>
        </div>
      </div>
      <StatusBar />
    </div>
  );
}

export default function App() {
  return (
    <main className="relative h-[1290px] w-[2505px] overflow-hidden bg-[#1f1f1f]">
      <Defs />
      <Editor />
      <ControlPanel />
      <SettingsWindow />
      <SystemDialog />
      <svg viewBox="0 0 2505 1290" className="pointer-events-none absolute inset-0 h-[1290px] w-[2505px]" fill="none" stroke="#ff00ff" strokeWidth="15" strokeLinecap="round" strokeLinejoin="round">
        <path d="M316 858 L330 846 L348 834 L370 823 Q380 819 396 819 L419 821" />
        <path d="M2153 514 L2166 510 L2186 499 Q2200 492 2208 483 L2219 470" />
      </svg>
    </main>
  );
}
